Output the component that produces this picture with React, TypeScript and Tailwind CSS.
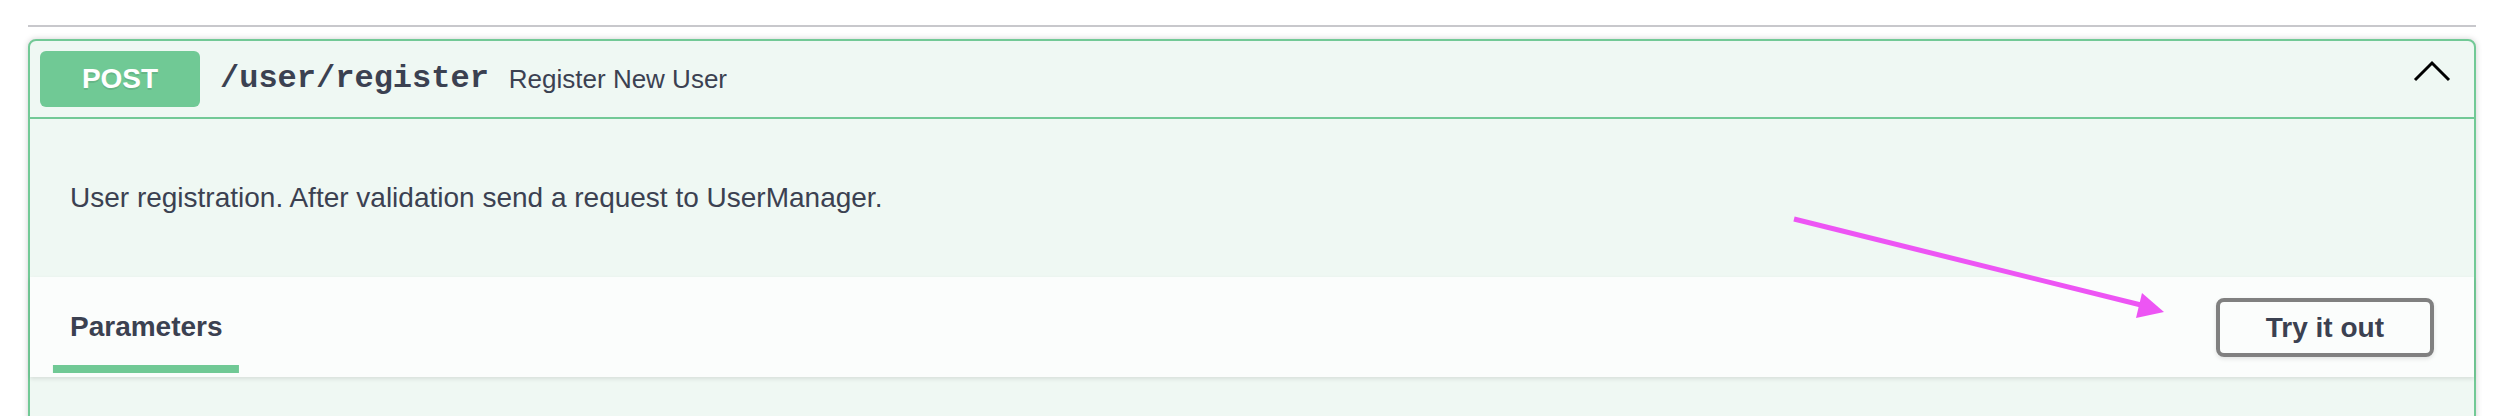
import React from "react";

export default function App() {
  return (
    <div className="relative w-[2502px] h-[416px] overflow-hidden bg-white">
      <div className="pl-[28px] pr-[26px] pt-[25px]">
        <div className="h-[2px] bg-[#c8c8cc]" />
        <div className="mt-[12px] rounded-[8px] border-2 border-[#72c996] bg-[#eff8f3] shadow-[0_0_6px_rgba(0,0,0,0.19)]">
          {/* summary */}
          <div className="flex items-center p-[10px] border-b-2 border-[#72c996]">
            <div
              className="w-[160px] h-[56px] rounded-[6px] bg-[#70c995] flex items-center justify-center text-white font-bold text-[28px] [text-shadow:0_2px_0_rgba(0,0,0,0.1)]"
              style={{ fontFamily: '"Liberation Sans", Arial, sans-serif' }}
            >
              POST
            </div>
            <span
              className="px-[20px] text-[32px] font-bold text-[#3b4151] leading-none"
              style={{ fontFamily: '"Liberation Mono", "Courier New", monospace' }}
            >
              /user/register
            </span>
            <span
              className="text-[26px] text-[#3b4151] leading-none"
              style={{ fontFamily: '"Liberation Sans", Arial, sans-serif' }}
            >
              Register New User
            </span>
            <svg
              className="ml-auto mr-[12px] -translate-y-[4px]"
              width="40"
              height="40"
              viewBox="0 0 40 40"
            >
              <polyline
                points="3,25 20,8 37,25"
                fill="none"
                stroke="#000"
                strokeWidth="3"
              />
            </svg>
          </div>
          {/* description */}
          <div className="px-[40px] py-[30px]">
            <p
              className="my-[28px] text-[28px] leading-[42px] text-[#3b4151]"
              style={{ fontFamily: '"Liberation Sans", Arial, sans-serif' }}
            >
              User registration. After validation send a request to UserManager.
            </p>
          </div>
          {/* section header */}
          <div className="flex items-center justify-between min-h-[100px] px-[40px] bg-[#fbfdfc] shadow-[0_2px_4px_rgba(0,0,0,0.1)]">
            <h4
              className="text-[28px] font-bold text-[#3b4151] leading-[32px]"
              style={{ fontFamily: '"Liberation Sans", Arial, sans-serif' }}
            >
              <span className="relative">
                Parameters
                <span className="absolute left-1/2 -translate-x-1/2 -bottom-[31px] h-[8px] w-[122%] bg-[#70c995]" />
              </span>
            </h4>
            <button
              className="border-4 border-[#808080] rounded-[8px] px-[46px] py-[10px] text-[28px] font-bold leading-[31px] text-[#3b4151] bg-transparent shadow-[0_2px_4px_rgba(0,0,0,0.1)]"
              style={{ fontFamily: '"Liberation Sans", Arial, sans-serif' }}
            >
              Try it out
            </button>
          </div>
          <div className="h-[200px]" />
        </div>
      </div>
      {/* annotation arrow */}
      <svg
        className="absolute inset-0 pointer-events-none"
        width="2502"
        height="416"
        viewBox="0 0 2502 416"
      >
        <line x1="1794" y1="219" x2="2141" y2="305" stroke="#ed55f4" strokeWidth="5" />
        <polygon points="2142,293 2136,318 2164,312" fill="#ed55f4" />
      </svg>
    </div>
  );
}
